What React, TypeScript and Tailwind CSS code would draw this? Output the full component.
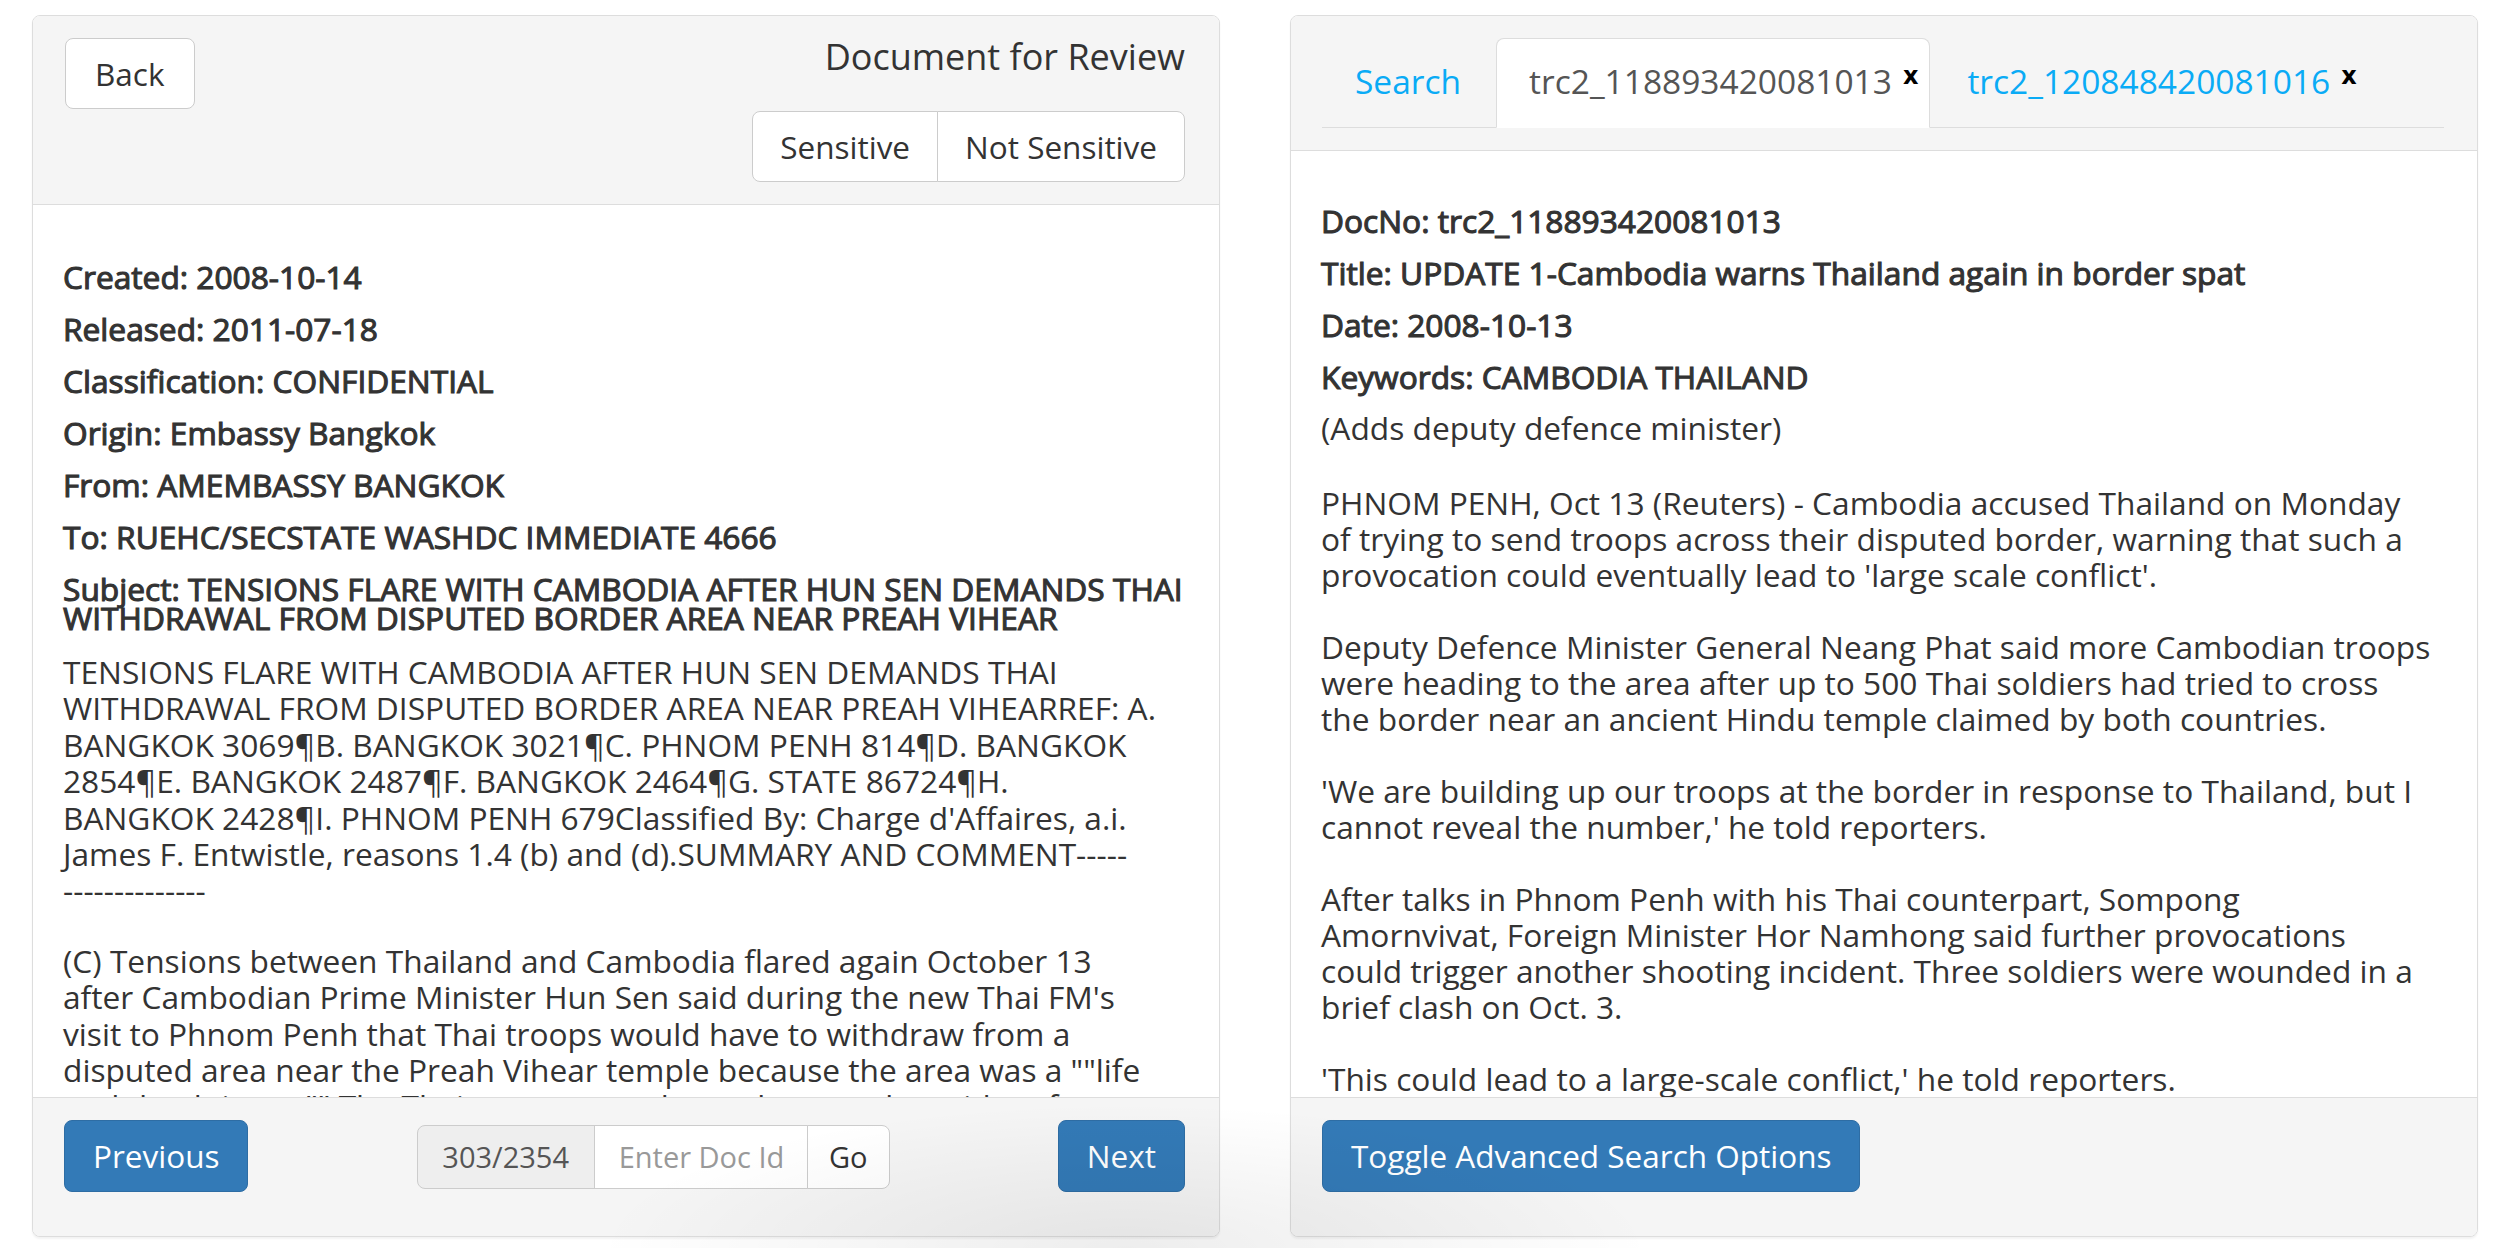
import React from 'react'

const font = "font-['Open_Sans',sans-serif]"

const leftMeta = [
  'Created: 2008-10-14',
  'Released: 2011-07-18',
  'Classification: CONFIDENTIAL',
  'Origin: Embassy Bangkok',
  'From: AMEMBASSY BANGKOK',
  'To: RUEHC/SECSTATE WASHDC IMMEDIATE 4666',
]

const leftBody = [
  [
    'TENSIONS FLARE WITH CAMBODIA AFTER HUN SEN DEMANDS THAI',
    'WITHDRAWAL FROM DISPUTED BORDER AREA NEAR PREAH VIHEARREF: A.',
    'BANGKOK 3069¶B. BANGKOK 3021¶C. PHNOM PENH 814¶D. BANGKOK',
    '2854¶E. BANGKOK 2487¶F. BANGKOK 2464¶G. STATE 86724¶H.',
    "BANGKOK 2428¶I. PHNOM PENH 679Classified By: Charge d'Affaires, a.i.",
    'James F. Entwistle, reasons 1.4 (b) and (d).SUMMARY AND COMMENT-----',
    '--------------',
  ],
  [
    '(C) Tensions between Thailand and Cambodia flared again October 13',
    "after Cambodian Prime Minister Hun Sen said during the new Thai FM's",
    'visit to Phnom Penh that Thai troops would have to withdraw from a',
    'disputed area near the Preah Vihear temple because the area was a ""life',
    'and death issue."" The Thai troops must leave the area, he said, or face',
  ],
]

const rightMeta = [
  'DocNo: trc2_118893420081013',
  'Title: UPDATE 1-Cambodia warns Thailand again in border spat',
  'Date: 2008-10-13',
  'Keywords: CAMBODIA THAILAND',
]

const rightBody = [
  [
    'PHNOM PENH, Oct 13 (Reuters) - Cambodia accused Thailand on Monday',
    'of trying to send troops across their disputed border, warning that such a',
    "provocation could eventually lead to 'large scale conflict'.",
  ],
  [
    'Deputy Defence Minister General Neang Phat said more Cambodian troops',
    'were heading to the area after up to 500 Thai soldiers had tried to cross',
    'the border near an ancient Hindu temple claimed by both countries.',
  ],
  [
    "'We are building up our troops at the border in response to Thailand, but I",
    "cannot reveal the number,' he told reporters.",
  ],
  [
    'After talks in Phnom Penh with his Thai counterpart, Sompong',
    'Amornvivat, Foreign Minister Hor Namhong said further provocations',
    'could trigger another shooting incident. Three soldiers were wounded in a',
    'brief clash on Oct. 3.',
  ],
  ["'This could lead to a large-scale conflict,' he told reporters."],
]

const Lines = ({ lines }: { lines: string[] }) => (
  <>
    {lines.map((l, i) => (
      <React.Fragment key={i}>
        {i > 0 && <br />}
        {l}
      </React.Fragment>
    ))}
  </>
)

// headings look heavy but keep the regular advance widths
const heading = 'leading-[29px] [-webkit-text-stroke:1.1px_#333]'

const primaryBtn =
  'h-[72px] px-[28px] rounded-[8px] bg-[#337ab7] border border-[#2e6da4] text-white text-[31.5px] leading-none'

const DocumentPanel = () => (
  <div className="w-[1188px] h-[1222px] shrink-0 flex flex-col bg-white border border-[#ddd] rounded-[8px] overflow-hidden shadow-[0_2px_2px_rgba(0,0,0,0.05)]">
    {/* Header */}
    <div className="h-[189px] shrink-0 flex justify-between bg-[#f5f5f5] border-b border-[#ddd] pl-[32px] pr-[34px] pt-[21px]">
      <button
        type="button"
        className="mt-[1px] h-[71px] px-[29px] rounded-[8px] bg-white border border-[#ccc] text-[#333] text-[31.5px] leading-none"
      >
        Back
      </button>
      <div className="flex flex-col items-end">
        <div className="text-[36px] leading-[40px] text-[#333]">Document for Review</div>
        <div className="mt-[34px] flex h-[71px]">
          <button
            type="button"
            className="px-[27px] rounded-l-[8px] bg-white border border-[#ccc] text-[#333] text-[31.5px] leading-none"
          >
            Sensitive
          </button>
          <button
            type="button"
            className="-ml-px px-[27px] rounded-r-[8px] bg-white border border-[#ccc] text-[#333] text-[31.5px] leading-none"
          >
            Not Sensitive
          </button>
        </div>
      </div>
    </div>

    {/* Body */}
    <div className="flex-1 min-h-0 overflow-hidden pl-[30px] pr-[20px] pt-[57px] text-[#333] text-[31.7px] whitespace-nowrap">
      {leftMeta.map((m) => (
        <div key={m} className={`${heading} mb-[23px]`}>
          {m}
        </div>
      ))}
      <div className={`${heading} mb-[22px]`}>
        Subject: TENSIONS FLARE WITH CAMBODIA AFTER HUN SEN DEMANDS THAI
        <br />
        WITHDRAWAL FROM DISPUTED BORDER AREA NEAR PREAH VIHEAR
      </div>
      <p className="leading-[36.4px] mb-[34px]">
        <Lines lines={leftBody[0]} />
      </p>
      <p className="leading-[36.4px]">
        <Lines lines={leftBody[1]} />
      </p>
    </div>

    {/* Footer */}
    <div className="h-[139px] shrink-0 flex items-start justify-between bg-[#f5f5f5] border-t border-[#ddd] pl-[31px] pr-[34px] pt-[22px]">
      <button type="button" className={primaryBtn}>
        Previous
      </button>
      <div className="mt-[5px] flex h-[64px] text-[29px]">
        <div className="w-[178px] flex items-center justify-center bg-[#eee] border border-[#ccc] rounded-l-[8px] text-[#555]">
          303/2354
        </div>
        <input
          placeholder="Enter Doc Id"
          className="w-[214px] -ml-px px-[24px] bg-white border border-[#ccc] text-[#555] placeholder:text-[#999] outline-none"
        />
        <button
          type="button"
          className="w-[83px] -ml-px bg-white border border-[#ccc] rounded-r-[8px] text-[#333]"
        >
          Go
        </button>
      </div>
      <button type="button" className={primaryBtn}>
        Next
      </button>
    </div>
  </div>
)

const Tab = ({
  label,
  active,
  closable,
}: {
  label: string
  active?: boolean
  closable?: boolean
}) => (
  <div
    className={
      'h-[90px] -mb-px mr-[4px] flex items-start border rounded-t-[8px] pt-[22px] pl-[32px] ' +
      (active
        ? 'bg-white border-[#ddd] border-b-transparent text-[#555] pr-[11px]'
        : 'border-transparent text-[#0aabf5] ' + (closable ? 'pr-[11px]' : 'pr-[30px]'))
    }
  >
    <span className="text-[33.5px] leading-[40px]">{label}</span>
    {closable && (
      <span className="ml-[11px] mt-[3px] font-['DejaVu_Sans',sans-serif] font-bold text-[24px] leading-[24px] text-black">
        x
      </span>
    )}
  </div>
)

const SearchPanel = () => (
  <div className="w-[1188px] h-[1222px] shrink-0 flex flex-col bg-white border border-[#ddd] rounded-[8px] overflow-hidden shadow-[0_2px_2px_rgba(0,0,0,0.05)]">
    {/* Tabs */}
    <div className="h-[135px] shrink-0 bg-[#f5f5f5] border-b border-[#ddd] pl-[31px] pr-[33px] pt-[22px]">
      <div className="flex items-end border-b border-[#ddd]">
        <Tab label="Search" />
        <Tab label="trc2_118893420081013" active closable />
        <Tab label="trc2_120848420081016" closable />
      </div>
    </div>

    {/* Body */}
    <div className="flex-1 min-h-0 overflow-hidden pl-[30px] pr-[20px] pt-[55px] text-[#333] text-[31.7px] whitespace-nowrap">
      {rightMeta.map((m, i) => (
        <div
          key={m}
          className={`${heading} ${i === rightMeta.length - 1 ? 'mb-[19px]' : 'mb-[23px]'}`}
        >
          {m}
        </div>
      ))}
      <p className="leading-[36px] mb-[39px]">(Adds deputy defence minister)</p>
      {rightBody.map((para, i) => (
        <p key={i} className="leading-[36px] mb-[36px]">
          <Lines lines={para} />
        </p>
      ))}
    </div>

    {/* Footer */}
    <div className="h-[139px] shrink-0 bg-[#f5f5f5] border-t border-[#ddd] pl-[31px] pt-[22px]">
      <button type="button" className={primaryBtn}>
        Toggle Advanced Search Options
      </button>
    </div>
  </div>
)

export default function App() {
  return (
    <div className={`${font} relative w-full h-[1248px] overflow-hidden bg-white flex gap-[70px] pl-[32px] pt-[15px]`}>
      <DocumentPanel />
      <SearchPanel />
      {/* soft shadow cast over the bottom edge */}
      <div className="pointer-events-none absolute left-[550px] top-[1090px] w-[1150px] h-[320px] bg-[radial-gradient(ellipse_at_center,rgba(0,0,0,0.07),rgba(0,0,0,0)_65%)]" />
    </div>
  )
}
